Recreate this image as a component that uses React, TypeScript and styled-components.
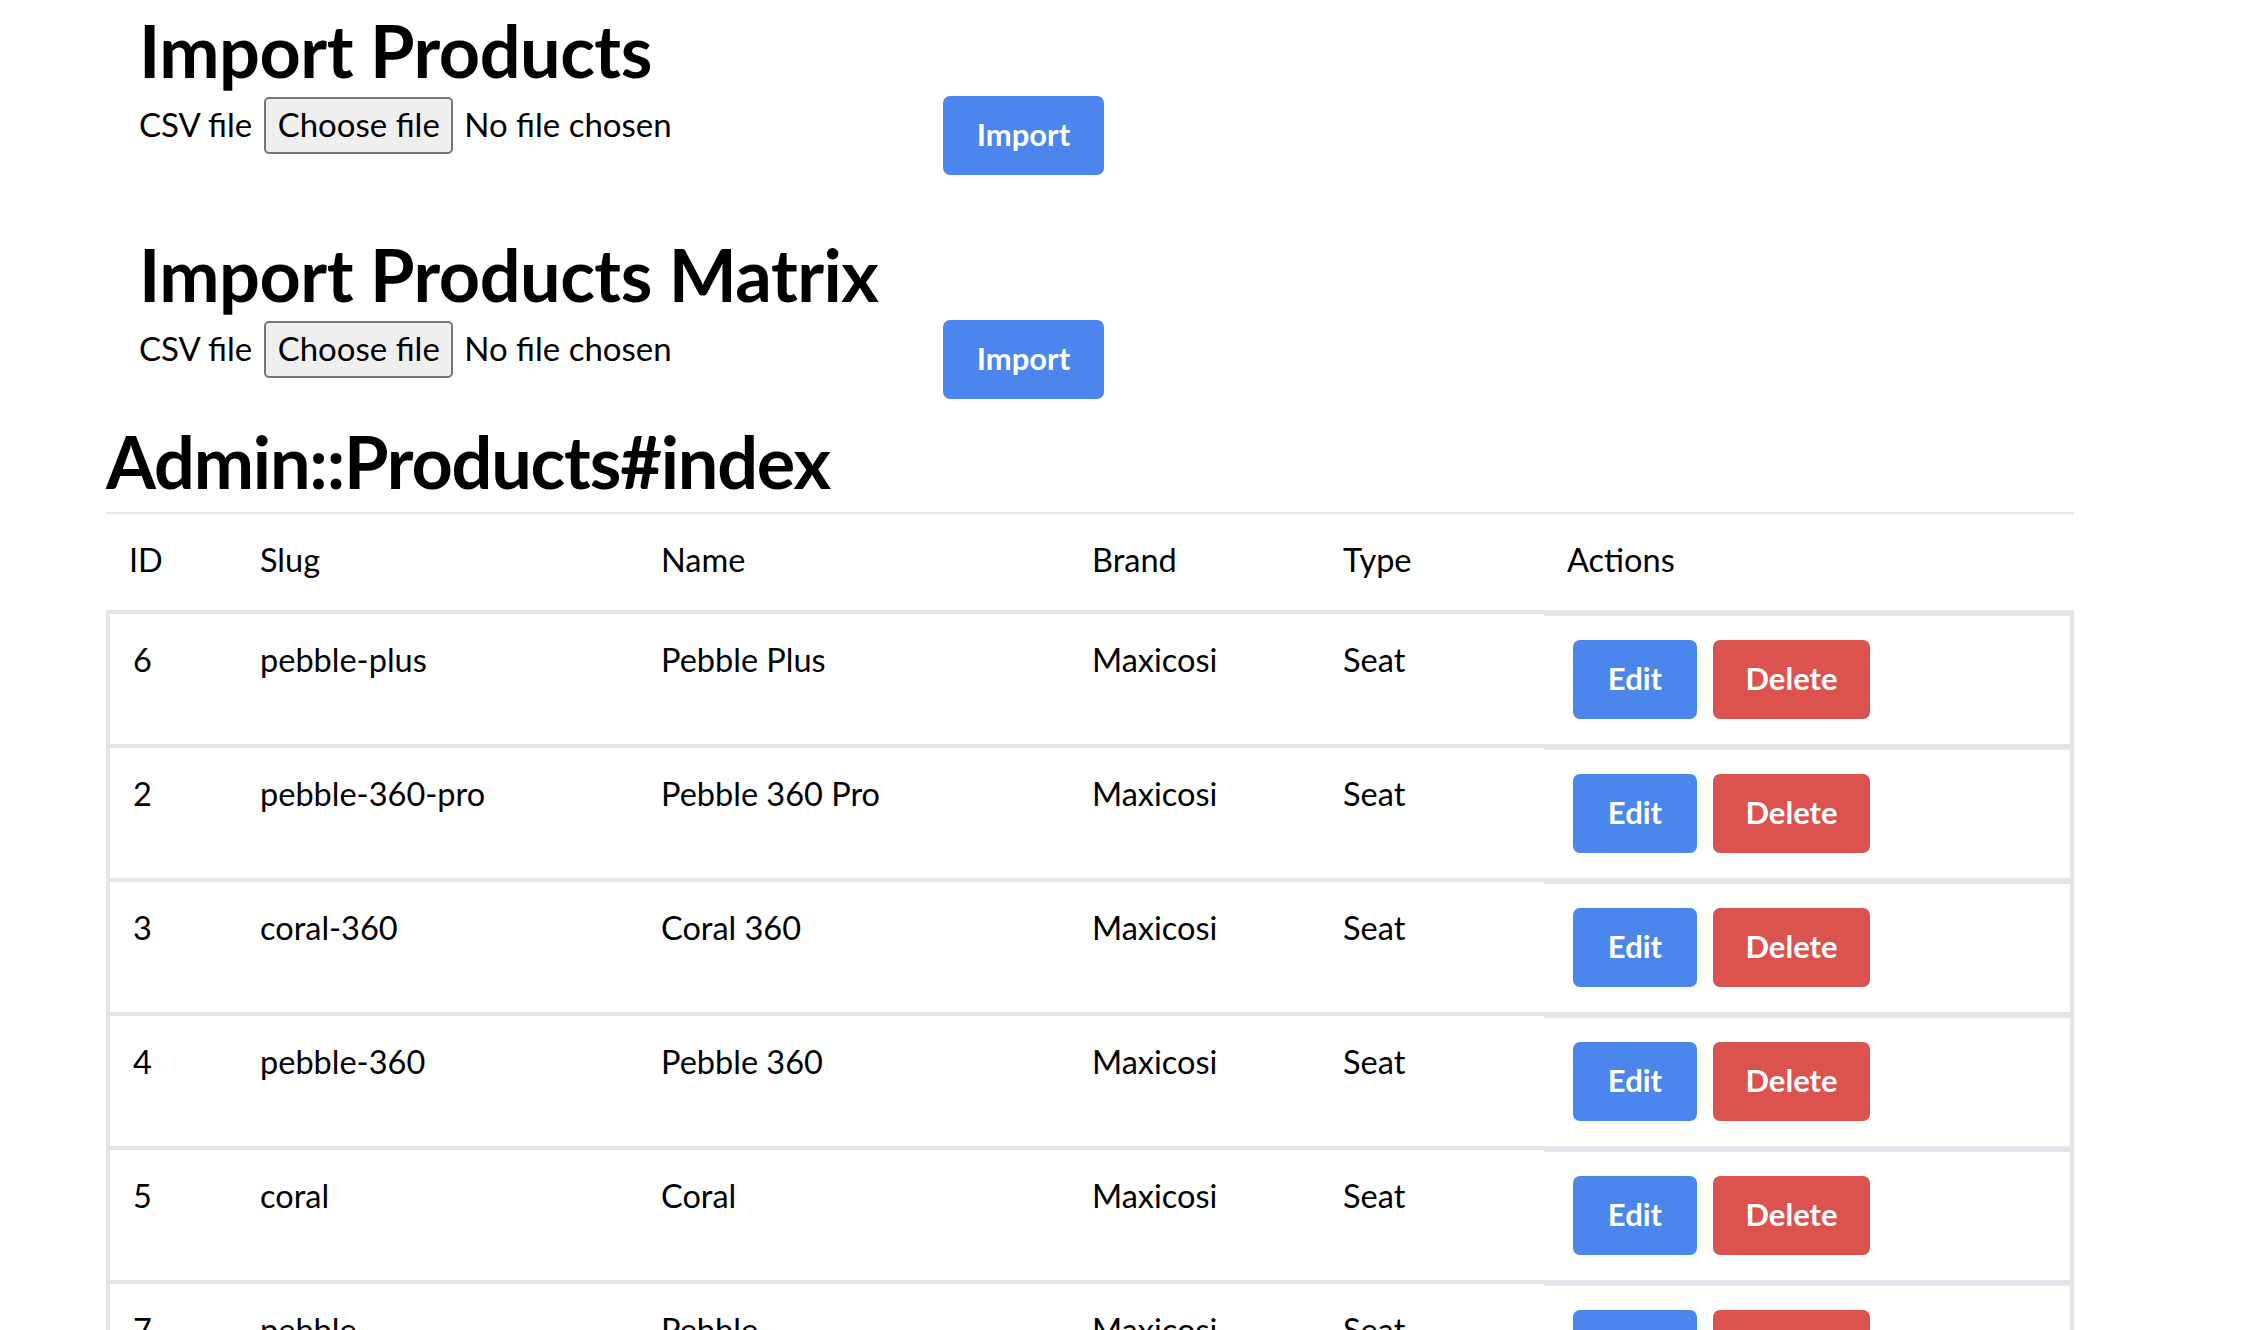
import styled, { createGlobalStyle } from 'styled-components'

const GlobalStyle = createGlobalStyle`
  body {
    margin: 0;
    background: #fff;
    color: #000;
    font-family: Lato, 'Noto Sans', sans-serif;
  }
`

const Page = styled.main`
  padding-left: 106px;
`

const ImportSection = styled.section`
  padding-left: 33px;
  padding-top: 10px;

  & + & {
    padding-top: 59px;
  }
`

const Heading = styled.h1`
  margin: 0 0 6px;
  font-size: 72px;
  line-height: 80px;
  font-weight: 700;
  letter-spacing: -0.5px;
`

const PageTitle = styled(Heading)`
  margin: 22px 0 11px 0;
  letter-spacing: -1.2px;
`

const FormRow = styled.form`
  display: grid;
  grid-template-columns: 804px auto;
  align-items: start;
`

const FileField = styled.label`
  display: flex;
  align-items: center;
  gap: 11px;
  height: 58px;
  padding-bottom: 3px;
  box-sizing: border-box;
  font-size: 33px;
`

const FileButton = styled.span`
  display: inline-flex;
  align-items: center;
  justify-content: center;
  box-sizing: border-box;
  width: 189px;
  height: 57px;
  margin: 3px 0 0 1px;
  padding-bottom: 3px;
  border: 2px solid #767676;
  border-radius: 5px;
  background: #efefef;
`

const Button = styled.button<{ $tone?: 'blue' | 'red'; $width: number }>`
  box-sizing: border-box;
  width: ${(p) => p.$width}px;
  height: 79px;
  padding: 0 0 4px;
  border: none;
  border-radius: 7px;
  background: ${(p) => (p.$tone === 'red' ? '#dc524e' : '#4a86ec')};
  color: #fff;
  font-family: inherit;
  font-size: 31px;
  font-weight: 700;
  cursor: pointer;
`

const Table = styled.table`
  width: 1968px;
  table-layout: fixed;
  border-collapse: separate;
  border-spacing: 0;
  font-size: 32.5px;
`

const Th = styled.th`
  text-align: left;
  font-weight: 400;
  line-height: 40px;
  padding: 26px 23px 30px;
  border-top: 2px solid #e2e5e9;
`

const Td = styled.td`
  vertical-align: top;
  line-height: 40px;
  padding: 26px 23px 0;
  border-top: 4px solid #e2e5e9;

  &:first-child {
    border-left: 4px solid #e2e5e9;
  }
`

const ActionsTd = styled(Td)`
  padding: 24px 29px 25px;
  border-top-width: 6px;
  border-right: 4px solid #e2e5e9;
`

const Actions = styled.div`
  display: flex;
  gap: 16px;
`

type Product = { id: number; slug: string; name: string; brand: string; type: string }

const products: Product[] = [
  { id: 6, slug: 'pebble-plus', name: 'Pebble Plus', brand: 'Maxicosi', type: 'Seat' },
  { id: 2, slug: 'pebble-360-pro', name: 'Pebble 360 Pro', brand: 'Maxicosi', type: 'Seat' },
  { id: 3, slug: 'coral-360', name: 'Coral 360', brand: 'Maxicosi', type: 'Seat' },
  { id: 4, slug: 'pebble-360', name: 'Pebble 360', brand: 'Maxicosi', type: 'Seat' },
  { id: 5, slug: 'coral', name: 'Coral', brand: 'Maxicosi', type: 'Seat' },
  { id: 7, slug: 'pebble', name: 'Pebble', brand: 'Maxicosi', type: 'Seat' },
]

function ImportForm({ title }: { title: string }) {
  return (
    <ImportSection>
      <Heading>{title}</Heading>
      <FormRow onSubmit={(e) => e.preventDefault()}>
        <FileField>
          CSV file
          <FileButton>Choose file</FileButton>
          No file chosen
        </FileField>
        <Button $width={161}>Import</Button>
      </FormRow>
    </ImportSection>
  )
}

export default function App() {
  return (
    <Page>
      <GlobalStyle />
      <ImportForm title='Import Products' />
      <ImportForm title='Import Products Matrix' />
      <PageTitle>Admin::Products#index</PageTitle>
      <Table>
        <colgroup>
          <col style={{ width: 131 }} />
          <col style={{ width: 401 }} />
          <col style={{ width: 431 }} />
          <col style={{ width: 251 }} />
          <col style={{ width: 224 }} />
          <col style={{ width: 530 }} />
        </colgroup>
        <thead>
          <tr>
            <Th>ID</Th>
            <Th>Slug</Th>
            <Th>Name</Th>
            <Th>Brand</Th>
            <Th>Type</Th>
            <Th>Actions</Th>
          </tr>
        </thead>
        <tbody>
          {products.map((p) => (
            <tr key={p.id}>
              <Td>{p.id}</Td>
              <Td>{p.slug}</Td>
              <Td>{p.name}</Td>
              <Td>{p.brand}</Td>
              <Td>{p.type}</Td>
              <ActionsTd>
                <Actions>
                  <Button $width={124}>Edit</Button>
                  <Button $width={157} $tone='red'>
                    Delete
                  </Button>
                </Actions>
              </ActionsTd>
            </tr>
          ))}
        </tbody>
      </Table>
    </Page>
  )
}
